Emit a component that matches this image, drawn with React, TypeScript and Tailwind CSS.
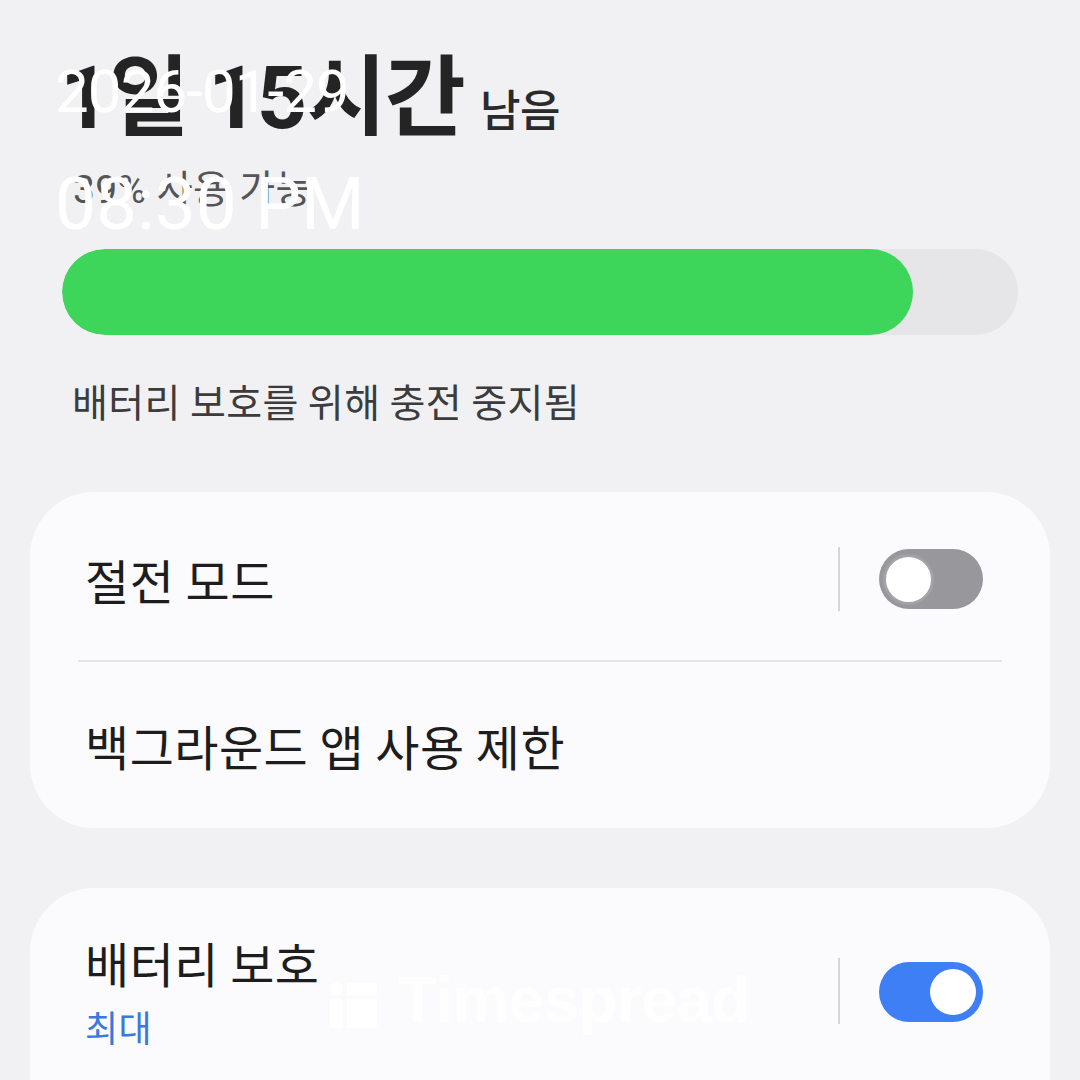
import React from "react";

const kr = { fontFamily: '"Noto Sans CJK KR", "Noto Sans", sans-serif' };
const mixed = { fontFamily: 'Roboto, "Noto Sans CJK KR", sans-serif' };

function Toggle({ on }: { on: boolean }) {
  return on ? (
    <div className="w-[104px] h-[60px] rounded-full bg-[#3e7ff6] flex items-center justify-end pr-[7px]">
      <div className="w-[46px] h-[46px] rounded-full bg-white" />
    </div>
  ) : (
    <div className="w-[104px] h-[60px] rounded-full bg-[#98979c] flex items-center pl-[4px]">
      <div className="w-[51px] h-[51px] rounded-full bg-white border-[3px] border-[#a3a2a7]" />
    </div>
  );
}

export default function App() {
  return (
    <div className="relative w-[1080px] h-[1080px] overflow-hidden bg-[#f1f1f3]" style={kr}>
      <div className="flex flex-col">
        <div className="pl-[60px] flex items-end h-[142px]">
          <span className="text-[88px] font-bold leading-none text-[#242424] tracking-[-0.02em]" style={mixed}>1일 15시간</span>
          <span className="ml-[16px] mb-[12px] text-[44px] leading-none text-[#2a2a2a] font-medium tracking-[-0.01em]">남음</span>
        </div>
        <div className="pl-[73px] mt-[29px] text-[39px] leading-none text-[#555] tracking-[0.01em]" style={mixed}>39% 사용 가능</div>
        <div className="mx-[62px] mt-[39px] h-[86px] rounded-full bg-[#e6e6e9] overflow-hidden flex">
          <div className="w-[851px] h-full rounded-full bg-[#3dd65a]" />
        </div>
        <div className="pl-[72px] mt-[46px] text-[39px] leading-none text-[#3c3c3c] tracking-[0.01em]">배터리 보호를 위해 충전 중지됨</div>

        <div className="mx-[30px] mt-[72px] rounded-[64px] bg-[#fbfbfd] flex flex-col">
          <div className="h-[168px] flex items-center pl-[55px] pr-[67px] pt-[6px]">
            <div className="flex-1 text-[48px] leading-none text-[#1d1d1d] tracking-[0.01em]">절전 모드</div>
            <div className="w-[2px] h-[64px] bg-[#d5d5d8] mr-[39px]" />
            <Toggle on={false} />
          </div>
          <div className="mx-[48px] h-[2px] bg-[#e4e4e7]" />
          <div className="h-[166px] flex items-center pl-[55px]">
            <div className="text-[48px] leading-none text-[#1d1d1d] tracking-[0.01em]">백그라운드 앱 사용 제한</div>
          </div>
        </div>

        <div className="mx-[30px] mt-[60px] rounded-[64px] bg-[#fbfbfd] h-[260px] flex items-start pl-[55px] pr-[67px] pt-[50px]">
          <div className="flex-1 flex flex-col">
            <div className="text-[48px] leading-none text-[#1d1d1d] tracking-[0.01em]">배터리 보호</div>
            <div className="mt-[22px] text-[36px] leading-none text-[#3b78dc] tracking-[0.01em]">최대</div>
          </div>
          <div className="w-[2px] h-[66px] bg-[#d5d5d8] mr-[39px] mt-[20px]" />
          <div className="mt-[24px]">
            <Toggle on={true} />
          </div>
        </div>
      </div>

      {/* timestamp overlay */}
      <div className="absolute left-[55px] top-[62px] text-white leading-none" style={{ fontFamily: "Roboto, sans-serif" }}>
        <div className="text-[60px] leading-none tracking-[-0.015em]">2026-01-29</div>
        <div className="mt-[46px] text-[73px] leading-none">08:30 PM</div>
      </div>

      {/* watermark */}
      <div className="absolute left-[330px] top-[968px] flex items-center gap-[20px] text-white/80">
        <svg width="48" height="46" viewBox="0 0 48 46" className="mt-[10px]">
          <circle cx="6.5" cy="7" r="6.5" fill="white" fillOpacity="0.85" />
          <rect x="0" y="17" width="13" height="29" rx="1" fill="white" fillOpacity="0.85" />
          <rect x="17" y="1" width="30" height="12" rx="1" fill="white" fillOpacity="0.85" />
          <rect x="17" y="17" width="30" height="29" rx="1" fill="white" fillOpacity="0.85" />
        </svg>
        <span className="text-[64px] font-bold leading-none tracking-[-0.01em]" style={{ fontFamily: '"Liberation Sans", sans-serif' }}>Timespread</span>
      </div>
    </div>
  );
}
